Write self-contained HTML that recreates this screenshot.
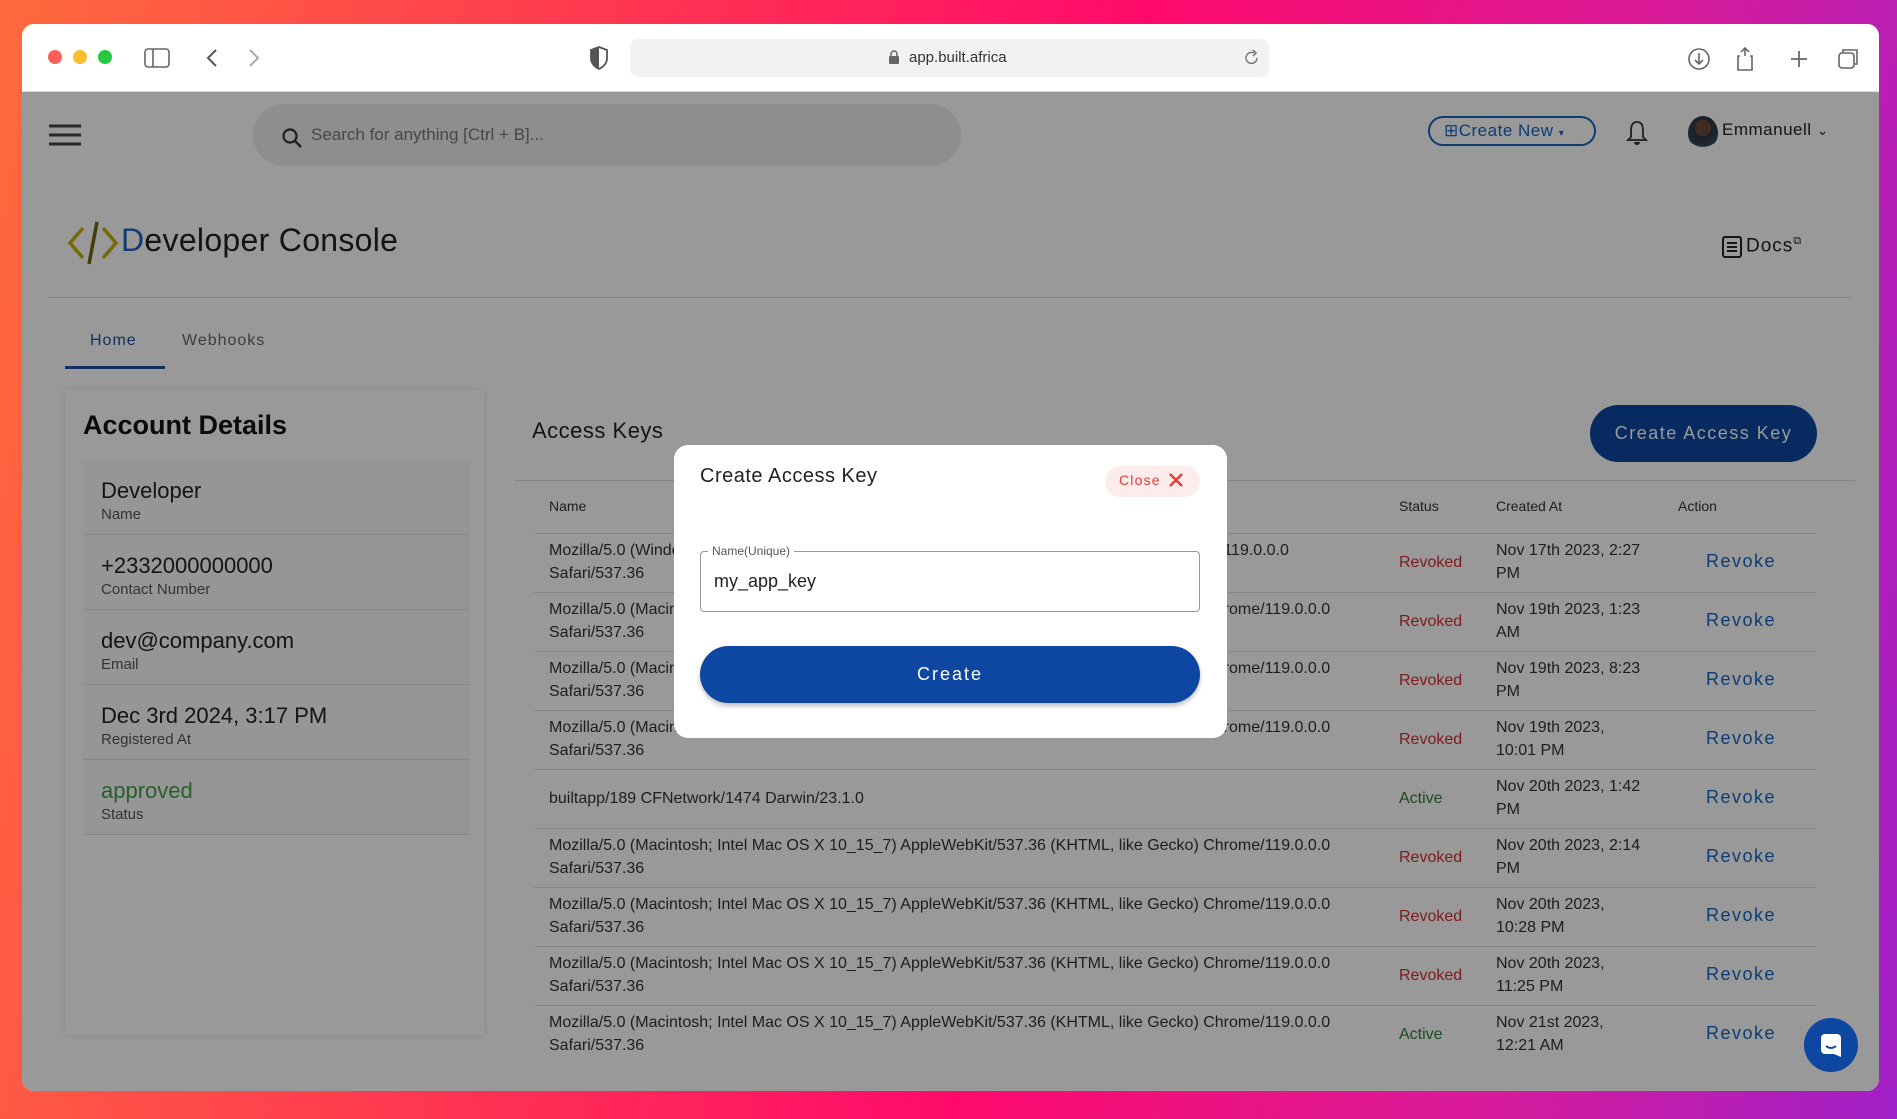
<!DOCTYPE html>
<html><head><meta charset="utf-8"><style>
*{box-sizing:border-box;margin:0;padding:0}
body{width:1897px;height:1119px;overflow:hidden;font-family:"Liberation Sans",sans-serif;background:linear-gradient(100deg,#ff6a3d 0%,#ff2d55 35%,#ff0a6c 55%,#d81b9a 80%,#a020c8 100%);position:relative}
.win{position:absolute;left:22px;top:24px;width:1857px;height:1067px;border-radius:12px;overflow:hidden;background:#fff}
.tb{position:absolute;left:0;top:0;width:100%;height:68px;background:#fff;border-bottom:1px solid #ddd}
.a{position:absolute}
.content{position:absolute;left:0;top:68px;width:100%;height:999px;background:#fff;overflow:hidden}
.in{position:absolute;left:0;top:-24px;width:100%;height:1030px}
.ov{position:absolute;left:0;top:68px;width:100%;height:999px;background:rgba(0,0,0,.4)}
.row{position:absolute;left:512px;width:1282px;height:59px;border-bottom:1px solid #e0e0e0;font-size:16px;color:#333;line-height:23px}
.row .n{position:absolute;left:15px;top:5px;white-space:nowrap}
.row .s{position:absolute;left:865px;top:17px}
.row .c{position:absolute;left:962px;top:5px;white-space:nowrap}
.row .r{position:absolute;left:1172px;top:16px;color:#1565c0;font-size:18px;letter-spacing:1.5px}
.rev{color:#d32f2f}.act{color:#2e7d32}
.item{position:absolute;left:18px;width:387px;height:75px;border-bottom:1px solid #e0e0e0;background:#fafafa}
.item .v{position:absolute;left:18px;top:18px;font-size:22px;color:#222}
.item .l{position:absolute;left:18px;top:46px;font-size:15px;color:#555}
</style></head><body>
<div class="win">
 <div class="tb">
  <div class="a" style="left:26px;top:26px;width:14px;height:14px;border-radius:50%;background:#ff5f57"></div>
  <div class="a" style="left:51px;top:26px;width:14px;height:14px;border-radius:50%;background:#febc2e"></div>
  <div class="a" style="left:76px;top:26px;width:14px;height:14px;border-radius:50%;background:#28c840"></div>
  <svg class="a" style="left:122px;top:24px" width="26" height="20"><rect x="1" y="1" width="24" height="18" rx="3" fill="none" stroke="#666" stroke-width="1.6"/><line x1="9" y1="1" x2="9" y2="19" stroke="#666" stroke-width="1.6"/></svg>
  <svg class="a" style="left:182px;top:24px" width="60" height="20"><path d="M12 2 L4 10 L12 18" fill="none" stroke="#555" stroke-width="2"/><path d="M46 2 L54 10 L46 18" fill="none" stroke="#aaa" stroke-width="2"/></svg>
  <svg class="a" style="left:568px;top:22px" width="18" height="24"><path d="M9 1 L17 4 V12 C17 18 13 21 9 23 C5 21 1 18 1 12 V4 Z" fill="none" stroke="#555" stroke-width="1.8"/><path d="M9 1 V23 C5 21 1 18 1 12 V4Z" fill="#555"/></svg>
  <div class="a" style="left:608px;top:15px;width:639px;height:38px;background:#f2f2f2;border-radius:8px"></div>
  <svg class="a" style="left:866px;top:26px" width="12" height="15"><rect x="1" y="6" width="10" height="8" rx="1" fill="#666"/><path d="M3 6 V4 a3 3 0 0 1 6 0 V6" fill="none" stroke="#666" stroke-width="1.5"/></svg>
  <div class="a" style="left:887px;top:25px;font-size:15px;color:#333">app.built.africa</div>
  <svg class="a" style="left:1222px;top:25px" width="16" height="18"><path d="M13 9 a5.5 5.5 0 1 1 -3 -5" fill="none" stroke="#777" stroke-width="1.5"/><path d="M9 1 L12 4 L9 7" fill="none" stroke="#777" stroke-width="1.5"/></svg>
  <svg class="a" style="left:1665px;top:22px" width="180" height="26"><circle cx="12" cy="13" r="10" fill="none" stroke="#666" stroke-width="1.6"/><path d="M12 7 V18 M8 14 L12 18 L16 14" fill="none" stroke="#666" stroke-width="1.6"/><path d="M58 10 V2 M54 6 L58 2 L62 6 M53 10 H51 V24 H65 V10 H63" fill="none" stroke="#666" stroke-width="1.6"/><path d="M104 13 H120 M112 5 V21" stroke="#666" stroke-width="1.8"/><rect x="152" y="7" width="15" height="15" rx="3" fill="none" stroke="#666" stroke-width="1.6"/><path d="M156 7 V4 H170 V18 H167" fill="none" stroke="#666" stroke-width="1.6"/></svg>
 </div>
 <div class="content"><div class="in">
  <svg class="a" style="left:27px;top:56px" width="32" height="22"><path d="M0 2 H32 M0 11 H32 M0 20 H32" stroke="#444" stroke-width="3"/></svg>
  <div class="a" style="left:231px;top:36px;width:708px;height:62px;border-radius:31px;background:#ededed"></div>
  <svg class="a" style="left:259px;top:59px" width="22" height="22"><circle cx="9" cy="9" r="6.5" fill="none" stroke="#333" stroke-width="2.2"/><path d="M14 14 L20 20" stroke="#333" stroke-width="2.4"/></svg>
  <div class="a" style="left:289px;top:57px;font-size:17px;color:#777">Search for anything [Ctrl + B]...</div>
  <div class="a" style="left:1406px;top:48px;width:168px;height:30px;border:2px solid #1565c0;border-radius:15px;color:#1565c0;font-size:17px;padding:3px 0 0 14px;letter-spacing:.5px">⊞Create New <span style="font-size:10px">▾</span></div>
  <svg class="a" style="left:1604px;top:52px" width="22" height="26"><path d="M11 2 C5 2 5 8 5 12 V17 L2 20 H20 L17 17 V12 C17 8 17 2 11 2Z" fill="none" stroke="#333" stroke-width="1.8"/><path d="M8 22 a3 3 0 0 0 6 0" fill="#333"/></svg>
  <div class="a" style="left:1666px;top:48px;width:30px;height:34px;border-radius:50%;background:radial-gradient(circle at 50% 35%,#6b4a3a 30%,#2a3342 32%,#37485a 70%,transparent 72%)"></div>
  <div class="a" style="left:1700px;top:52px;font-size:17px;color:#222;letter-spacing:.5px">Emmanuell <span style="font-size:14px">⌄</span></div>
  <svg class="a" style="left:45px;top:152px" width="52" height="46"><path d="M16 8 L3 23 L16 38 M36 8 L49 23 L36 38" fill="none" stroke="#c9b00a" stroke-width="3.5"/><path d="M30 2 L22 44" stroke="#6d6a10" stroke-width="3.5"/></svg>
  <div class="a" style="left:99px;top:154px;font-size:32px;color:#222;letter-spacing:.3px"><span style="color:#1e63c4">D</span>eveloper <span>C</span>onsole</div>
  <svg class="a" style="left:1700px;top:168px" width="20" height="22"><rect x="1" y="1" width="18" height="20" rx="2" fill="none" stroke="#222" stroke-width="2"/><path d="M5 7 H15 M5 11 H15 M5 15 H15" stroke="#222" stroke-width="2"/></svg>
  <div class="a" style="left:1724px;top:167px;font-size:19px;color:#222;letter-spacing:1px">Docs<sup style="font-size:11px">⧉</sup></div>
  <div class="a" style="left:26px;top:229px;width:1803px;height:1px;background:#ddd"></div>
  <div class="a" style="left:68px;top:264px;font-size:16px;color:#1e4fa0;letter-spacing:1px">Home</div>
  <div class="a" style="left:43px;top:298px;width:100px;height:3px;background:#1e4fa0"></div>
  <div class="a" style="left:160px;top:264px;font-size:16px;color:#666;letter-spacing:1px">Webhooks</div>
  <div class="a" style="left:43px;top:322px;width:419px;height:645px;background:#fff;box-shadow:0 0 6px rgba(0,0,0,.12)">
   <div class="a" style="left:18px;top:20px;font-size:27px;font-weight:bold;color:#111">Account Details</div>
   <div class="item" style="top:70px"><div class="v">Developer</div><div class="l">Name</div></div>
   <div class="item" style="top:145px"><div class="v">+2332000000000</div><div class="l">Contact Number</div></div>
   <div class="item" style="top:220px"><div class="v">dev@company.com</div><div class="l">Email</div></div>
   <div class="item" style="top:295px"><div class="v">Dec 3rd 2024, 3:17 PM</div><div class="l">Registered At</div></div>
   <div class="item" style="top:370px"><div class="v" style="color:#43a047">approved</div><div class="l">Status</div></div>
  </div>
  <div class="a" style="left:510px;top:350px;font-size:22px;color:#222;letter-spacing:.5px">Access Keys</div>
  <div class="a" style="left:1568px;top:337px;width:227px;height:57px;border-radius:29px;background:#0d47a1;color:#fff;font-size:18px;letter-spacing:1.5px;text-align:center;line-height:57px">Create Access Key</div>
  <div class="a" style="left:492px;top:412px;width:1341px;height:1px;background:#ddd"></div>
  <div class="a" style="left:527px;top:430px;font-size:14px;color:#333">Name</div>
  <div class="a" style="left:1377px;top:430px;font-size:14px;color:#333">Status</div>
  <div class="a" style="left:1474px;top:430px;font-size:14px;color:#333">Created At</div>
  <div class="a" style="left:1656px;top:430px;font-size:14px;color:#333">Action</div>
  <div class="a" style="left:512px;top:465px;width:1282px;height:1px;background:#e0e0e0"></div>
  <div class="row" style="top:466px"><div class="n">Mozilla/5.0 (Windows NT 10.0; Win64; x64) AppleWebKit/537.36 (KHTML, like Gecko) Chrome/119.0.0.0<br>Safari/537.36</div><div class="s rev">Revoked</div><div class="c">Nov 17th 2023, 2:27<br>PM</div><div class="r">Revoke</div></div>
  <div class="row" style="top:525px"><div class="n">Mozilla/5.0 (Macintosh; Intel Mac OS X 10_15_7) AppleWebKit/537.36 (KHTML, like Gecko) Chrome/119.0.0.0<br>Safari/537.36</div><div class="s rev">Revoked</div><div class="c">Nov 19th 2023, 1:23<br>AM</div><div class="r">Revoke</div></div>
  <div class="row" style="top:584px"><div class="n">Mozilla/5.0 (Macintosh; Intel Mac OS X 10_15_7) AppleWebKit/537.36 (KHTML, like Gecko) Chrome/119.0.0.0<br>Safari/537.36</div><div class="s rev">Revoked</div><div class="c">Nov 19th 2023, 8:23<br>PM</div><div class="r">Revoke</div></div>
  <div class="row" style="top:643px"><div class="n">Mozilla/5.0 (Macintosh; Intel Mac OS X 10_15_7) AppleWebKit/537.36 (KHTML, like Gecko) Chrome/119.0.0.0<br>Safari/537.36</div><div class="s rev">Revoked</div><div class="c">Nov 19th 2023,<br>10:01 PM</div><div class="r">Revoke</div></div>
  <div class="row" style="top:702px"><div class="n" style="top:17px">builtapp/189 CFNetwork/1474 Darwin/23.1.0</div><div class="s act">Active</div><div class="c">Nov 20th 2023, 1:42<br>PM</div><div class="r">Revoke</div></div>
  <div class="row" style="top:761px"><div class="n">Mozilla/5.0 (Macintosh; Intel Mac OS X 10_15_7) AppleWebKit/537.36 (KHTML, like Gecko) Chrome/119.0.0.0<br>Safari/537.36</div><div class="s rev">Revoked</div><div class="c">Nov 20th 2023, 2:14<br>PM</div><div class="r">Revoke</div></div>
  <div class="row" style="top:820px"><div class="n">Mozilla/5.0 (Macintosh; Intel Mac OS X 10_15_7) AppleWebKit/537.36 (KHTML, like Gecko) Chrome/119.0.0.0<br>Safari/537.36</div><div class="s rev">Revoked</div><div class="c">Nov 20th 2023,<br>10:28 PM</div><div class="r">Revoke</div></div>
  <div class="row" style="top:879px"><div class="n">Mozilla/5.0 (Macintosh; Intel Mac OS X 10_15_7) AppleWebKit/537.36 (KHTML, like Gecko) Chrome/119.0.0.0<br>Safari/537.36</div><div class="s rev">Revoked</div><div class="c">Nov 20th 2023,<br>11:25 PM</div><div class="r">Revoke</div></div>
  <div class="row" style="top:938px;border-bottom:none"><div class="n">Mozilla/5.0 (Macintosh; Intel Mac OS X 10_15_7) AppleWebKit/537.36 (KHTML, like Gecko) Chrome/119.0.0.0<br>Safari/537.36</div><div class="s act">Active</div><div class="c">Nov 21st 2023,<br>12:21 AM</div><div class="r">Revoke</div></div>
 </div></div>
 <div class="ov"></div>
 <div class="a" style="left:1782px;top:994px;width:54px;height:54px;border-radius:50%;background:#0d47a1"></div>
 <svg class="a" style="left:1798px;top:1009px" width="22" height="24"><rect x="1" y="1" width="20" height="20" rx="4" fill="#fff"/><path d="M6 13 Q11 17 16 13" fill="none" stroke="#0d47a1" stroke-width="1.8"/><path d="M14 21 L21 24 L21 18Z" fill="#fff"/></svg>
 <div class="a" style="left:652px;top:421px;width:553px;height:293px;background:#fff;border-radius:14px">
  <div class="a" style="left:26px;top:20px;font-size:20px;color:#222;letter-spacing:.5px">Create Access Key</div>
  <div class="a" style="left:431px;top:21px;width:95px;height:31px;border-radius:16px;background:#fdecec;color:#e53935;font-size:14px;letter-spacing:1.2px;padding:6px 0 0 14px">Close <svg width="16" height="16" style="vertical-align:-3px;margin-left:2px"><path d="M2 2 L14 14 M14 2 L2 14" stroke="#e53935" stroke-width="2.4"/></svg></div>
  <div class="a" style="left:26px;top:106px;width:500px;height:61px;border:1px solid #999;border-radius:4px"></div>
  <div class="a" style="left:34px;top:99px;padding:0 4px;background:#fff;font-size:12px;color:#555">Name(Unique)</div>
  <div class="a" style="left:40px;top:126px;font-size:18px;color:#222">my_app_key</div>
  <div class="a" style="left:26px;top:201px;width:500px;height:57px;border-radius:29px;background:#0d47a1;color:#fff;font-size:18px;letter-spacing:2px;text-align:center;line-height:57px;box-shadow:0 3px 5px rgba(0,0,0,.25)">Create</div>
 </div>
</div>
</body></html>
